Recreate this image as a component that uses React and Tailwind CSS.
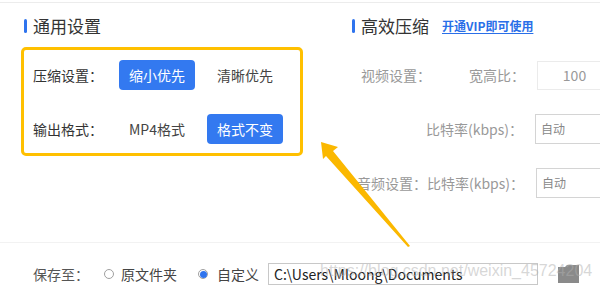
import React from "react";

function Radio({ checked }) {
  return (
    <span className="w-[10px] h-[10px] rounded-full border border-[#a0a0a0] bg-white flex items-center justify-center shrink-0">
      {checked && <span className="w-[7px] h-[7px] rounded-full bg-[#2f74ee]" />}
    </span>
  );
}

export default function App() {
  return (
    <div className="relative w-[600px] h-[290px] overflow-hidden bg-white font-['Noto_Sans_CJK_SC','Noto_Sans',sans-serif]">
      <div className="h-[2px]" />
      <div className="h-px bg-[#ececec]" />
      <div className="flex h-[239px] pt-[13px]">
        {/* left column */}
        <div className="ml-[21px] w-[282px] shrink-0">
          <div className="flex items-center h-5 pl-[3px] gap-[6px]">
            <span className="w-[3px] h-[14px] rounded-full bg-[#2f74ee]" />
            <span className="text-[17px] leading-5 text-[#333]">通用设置</span>
          </div>
          <div className="mt-[11px] h-[109px] border-[3px] border-[#ffc000] rounded-[5px] pl-[9px] pt-[10px] flex flex-col gap-[24px]">
            <div className="flex items-center h-[30px]">
              <span className="w-[86px] text-[14px] leading-5 text-[#333]">压缩设置：</span>
              <div className="flex gap-3">
                <span className="w-[76px] h-[30px] rounded-[4px] bg-[#3379f0] text-white text-[14px] flex items-center justify-center">缩小优先</span>
                <span className="w-[76px] h-[30px] rounded-[4px] text-[#444] text-[14px] flex items-center justify-center">清晰优先</span>
              </div>
            </div>
            <div className="flex items-center h-[30px]">
              <span className="w-[86px] text-[14px] leading-5 text-[#333]">输出格式：</span>
              <div className="flex gap-3">
                <span className="w-[76px] h-[30px] rounded-[4px] text-[#444] text-[14px] flex items-center justify-center">MP4格式</span>
                <span className="w-[76px] h-[30px] rounded-[4px] bg-[#3379f0] text-white text-[14px] flex items-center justify-center">格式不变</span>
              </div>
            </div>
          </div>
        </div>
        {/* right column */}
        <div className="ml-[49px] shrink-0">
          <div className="flex items-center h-5 gap-[6px]">
            <span className="w-[3px] h-[14px] rounded-full bg-[#2f74ee]" />
            <span className="text-[17px] leading-5 text-[#333]">高效压缩</span>
            <span className="ml-[7px] text-[12px] leading-4 font-bold text-[#2a6fe8] underline underline-offset-2">开通VIP即可使用</span>
          </div>
          <div className="mt-[24px] pl-[9px] flex flex-col gap-[24px]">
            <div className="flex items-center h-[30px]">
              <div className="w-[176px] flex justify-between pr-[12px] text-[14px] leading-5 text-[#999] whitespace-nowrap">
                <span>视频设置：</span>
                <span>宽高比：</span>
              </div>
              <div className="w-[75px] h-[29px] border border-[#ebebeb] flex items-center justify-center text-[14px] text-[#999]">100</div>
            </div>
            <div className="flex items-center h-[30px]">
              <div className="w-[174px] flex justify-end pr-[12px] text-[14px] leading-5 text-[#999] whitespace-nowrap">
                <span>比特率(kbps)：</span>
              </div>
              <div className="w-[80px] h-[30px] border border-[#d4d4d4] flex items-center pl-[5px] text-[12px] text-[#888]">自动</div>
            </div>
            <div className="flex items-center h-[30px]">
              <div className="w-[175px] flex justify-end pr-[12px] text-[14px] leading-5 text-[#999] whitespace-nowrap">
                <span>音频设置：比特率(kbps)：</span>
              </div>
              <div className="w-[80px] h-[30px] border border-[#d4d4d4] flex items-center pl-[5px] text-[12px] text-[#888]">自动</div>
            </div>
          </div>
        </div>
      </div>
      <div className="h-px bg-[#f2f2f2]" />
      <div className="flex items-center pl-[33px] pt-[20px]">
        <span className="w-[71px] text-[14px] leading-5 text-[#555]">保存至：</span>
        <Radio />
        <span className="ml-[7px] text-[14px] leading-5 text-[#444]">原文件夹</span>
        <span className="ml-[21px]"><Radio checked /></span>
        <span className="ml-[9px] text-[14px] leading-5 text-[#444]">自定义</span>
        <div className="ml-[9px] w-[270px] h-[22px] border border-[#c8c8c8] flex items-center pl-[5px] text-[14px] text-[#222]">
          {"C:\\Users\\Mloong\\Documents"}
        </div>
        <svg className="ml-[20px]" width="21" height="18" viewBox="0 0 21 18">
          <path d="M0 2 H7 L9 0 H21 V18 H0 Z" fill="#8a8a8a" />
        </svg>
      </div>
      <div className="absolute left-[320px] top-[261px] text-[16px] leading-5 font-['Liberation_Sans',sans-serif] text-[rgba(175,175,175,0.5)] pointer-events-none">
        https://blog.csdn.net/weixin_45724204
      </div>
      <svg className="absolute left-0 top-0 pointer-events-none" width="600" height="290" viewBox="0 0 600 290">
        <polygon points="321,142 338,147 333,151 410,246 408,247 326,156 323,159" fill="#fbb800" />
      </svg>
    </div>
  );
}
